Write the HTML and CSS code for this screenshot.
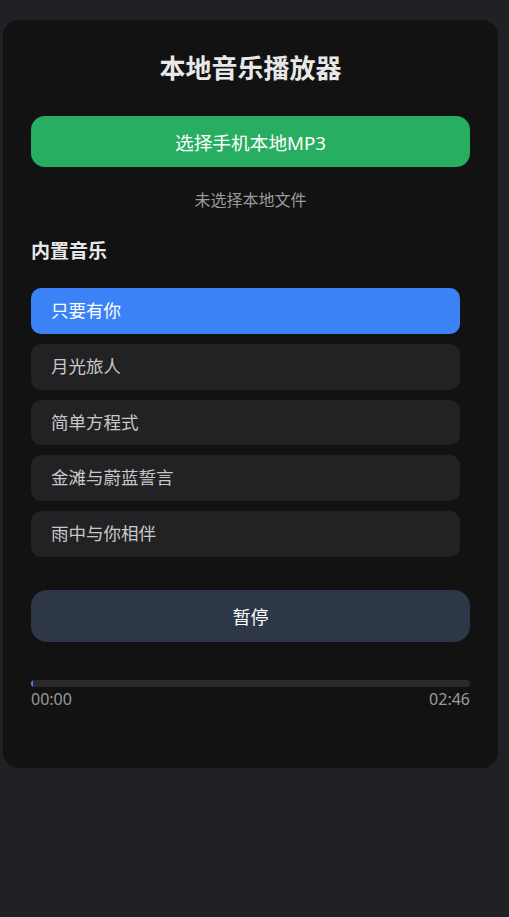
FILE: index.html
```html
<!DOCTYPE html>
<html lang="zh-CN">
<head>
  <meta charset="UTF-8">
  <meta name="viewport" content="width=device-width, initial-scale=1.0">
  <title>本地音乐播放器</title>
  <link rel="stylesheet" href="styles.css">
</head>
<body>

  <div class="player">
    <h1 class="title">本地音乐播放器</h1>

    <button class="btn btn-pick">选择手机本地MP3</button>
    <p class="file-name">未选择本地文件</p>

    <h2 class="section-title">内置音乐</h2>
    <ul class="playlist">
      <li class="track active">只要有你</li>
      <li class="track">月光旅人</li>
      <li class="track">简单方程式</li>
      <li class="track">金滩与蔚蓝誓言</li>
      <li class="track">雨中与你相伴</li>
    </ul>

    <button class="btn btn-play">暂停</button>

    <div class="progress">
      <div class="progress-bar"><div class="progress-fill" style="width: 0.5%"></div></div>
      <div class="times">
        <span>00:00</span>
        <span>02:46</span>
      </div>
    </div>
  </div>

</body>
</html>
```

FILE: styles.css
```css
* {
  box-sizing: border-box;
}

body {
  margin: 0;
  padding: 20px 11px 0 3px;
  min-height: 100vh;
  background-color: #202124;
  font-family: "Noto Sans", "Noto Sans CJK SC", sans-serif;
  color: #e6e6e6;
}

.player {
  background-color: #121212;
  border-radius: 16px;
  padding: 28px 28px 57px;
}

.title {
  margin: 0 0 28px;
  text-align: center;
  font-size: 26px;
  font-weight: 700;
  line-height: 40px;
  color: #e8e8e8;
}

.btn {
  display: block;
  width: 100%;
  border: none;
  color: #fff;
  font-family: inherit;
  cursor: pointer;
}

.btn-pick {
  height: 51px;
  border-radius: 14px;
  background-color: #27ae60;
  font-size: 18.7px;
}

.file-name {
  margin: 21px 0 0;
  text-align: center;
  font-size: 16px;
  line-height: 24px;
  color: #9a9a9a;
}

.section-title {
  margin: 26px 0 0;
  font-size: 19px;
  font-weight: 700;
  line-height: 26px;
  color: #e8e8e8;
}

.playlist {
  list-style: none;
  margin: 24px 10px 0 0;
  padding: 0;
  display: flex;
  flex-direction: column;
  gap: 10px;
}

.track {
  height: 45.75px;
  line-height: 45.75px;
  padding: 0 20px;
  border-radius: 10px;
  background-color: #222224;
  font-size: 17.5px;
  color: #c8c8c8;
  cursor: pointer;
}

.track.active {
  background-color: #3b82f6;
  color: #fff;
}

.btn-play {
  margin-top: 33px;
  height: 52px;
  border-radius: 16px;
  background-color: #2d3748;
  font-size: 18px;
}

.progress {
  margin-top: 38px;
}

.progress-bar {
  height: 7px;
  border-radius: 4px;
  background-color: #2a2a2c;
  overflow: hidden;
}

.progress-fill {
  height: 100%;
  background-color: #3b82f6;
}

.times {
  display: flex;
  justify-content: space-between;
  font-size: 16px;
  line-height: 24px;
  color: #9a9a9a;
}
```
